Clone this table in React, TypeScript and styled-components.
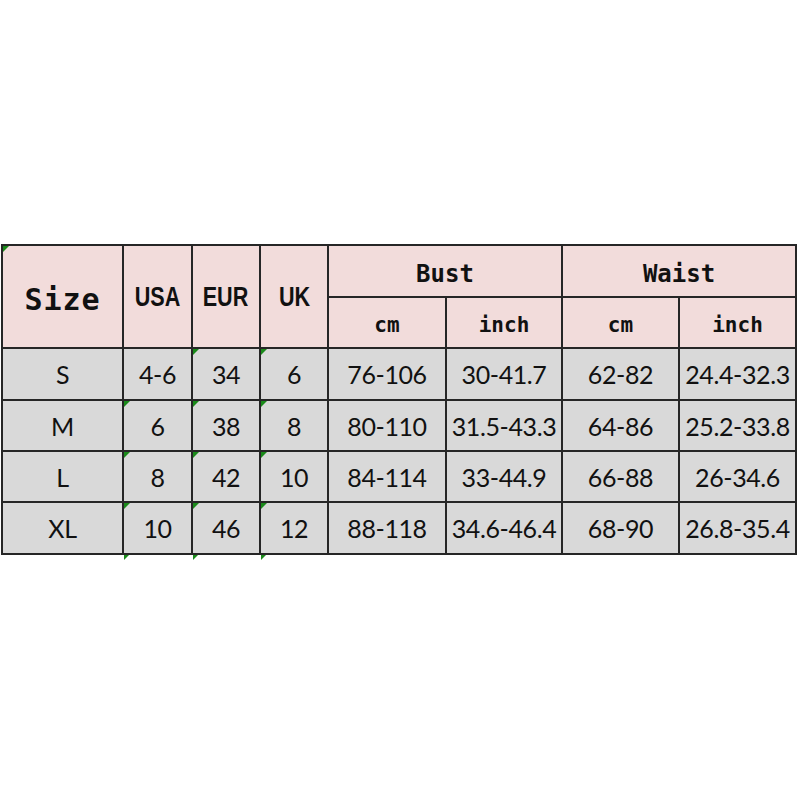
import React from "react";
import styled, { createGlobalStyle, css } from "styled-components";

const GlobalStyle = createGlobalStyle`
  html, body {
    margin: 0;
    padding: 0;
    background: #ffffff;
  }
`;

const Page = styled.div`
  width: 800px;
  height: 800px;
  padding: 244px 0 0 1px;
  box-sizing: border-box;
`;

const Grid = styled.div`
  display: grid;
  grid-template-columns: 119px 67px 66px 66px 116px 114px 115px 115px;
  grid-template-rows: 50px 49px 50px 49px 49px 50px;
  gap: 2px;
  padding: 2px;
  width: max-content;
  background: #262626;
`;

const Cell = styled.div<{
  $head?: boolean;
  $flag?: boolean;
  $flagBelow?: boolean;
  $span?: string;
}>`
  position: relative;
  display: flex;
  align-items: center;
  justify-content: center;
  background: ${(p) => (p.$head ? "#f2dcdb" : "#d9d9d9")};
  color: #111;
  font-family: "Lato", "Liberation Sans", sans-serif;
  font-size: 25px;
  letter-spacing: -0.4px;
  ${(p) => p.$span && `grid-area: ${p.$span};`}
  ${(p) =>
    p.$flag &&
    css`
      &::before {
        content: "";
        position: absolute;
        left: 0;
        top: 0;
        border-top: 6px solid #1a8a1a;
        border-right: 6px solid transparent;
      }
    `}
  ${(p) =>
    p.$flagBelow &&
    css`
      &::after {
        content: "";
        position: absolute;
        left: 0;
        bottom: -7px;
        border-top: 5px solid #1a8a1a;
        border-right: 5px solid transparent;
      }
    `}
`;

const MonoHead = styled.span<{ $size: number }>`
  font-family: "DejaVu Sans Mono", "Liberation Mono", monospace;
  font-weight: bold;
  font-size: ${(p) => p.$size}px;
  letter-spacing: ${(p) => (p.$size > 26 ? 1 : 0)}px;
  padding-top: 5px;
`;

const NarrowHead = styled.span`
  display: inline-block;
  font-family: "Liberation Sans", "Arial", sans-serif;
  font-weight: bold;
  font-size: 27px;
  letter-spacing: 0;
  transform: scaleX(0.8);
  padding-top: 1px;
`;

const rows = [
  ["S", "4-6", "34", "6", "76-106", "30-41.7", "62-82", "24.4-32.3"],
  ["M", "6", "38", "8", "80-110", "31.5-43.3", "64-86", "25.2-33.8"],
  ["L", "8", "42", "10", "84-114", "33-44.9", "66-88", "26-34.6"],
  ["XL", "10", "46", "12", "88-118", "34.6-46.4", "68-90", "26.8-35.4"],
];

export default function App() {
  return (
    <Page>
      <GlobalStyle />
      <Grid>
        <Cell $head $flag $span="1 / 1 / 3 / 2">
          <MonoHead $size={30}>Size</MonoHead>
        </Cell>
        <Cell $head $span="1 / 2 / 3 / 3">
          <NarrowHead>USA</NarrowHead>
        </Cell>
        <Cell $head $span="1 / 3 / 3 / 4">
          <NarrowHead>EUR</NarrowHead>
        </Cell>
        <Cell $head $span="1 / 4 / 3 / 5">
          <NarrowHead>UK</NarrowHead>
        </Cell>
        <Cell $head $span="1 / 5 / 2 / 7">
          <MonoHead $size={24}>Bust</MonoHead>
        </Cell>
        <Cell $head $span="1 / 7 / 2 / 9">
          <MonoHead $size={24}>Waist</MonoHead>
        </Cell>
        <Cell $head>
          <MonoHead $size={21}>cm</MonoHead>
        </Cell>
        <Cell $head>
          <MonoHead $size={21}>inch</MonoHead>
        </Cell>
        <Cell $head>
          <MonoHead $size={21}>cm</MonoHead>
        </Cell>
        <Cell $head>
          <MonoHead $size={21}>inch</MonoHead>
        </Cell>
        {rows.map((row, r) =>
          row.map((val, c) => (
            <Cell
              key={`${r}-${c}`}
              $flag={c >= 1 && c <= 3 && (r > 0 || c > 1)}
              $flagBelow={r === rows.length - 1 && c >= 1 && c <= 3}
            >
              {val}
            </Cell>
          ))
        )}
      </Grid>
    </Page>
  );
}
